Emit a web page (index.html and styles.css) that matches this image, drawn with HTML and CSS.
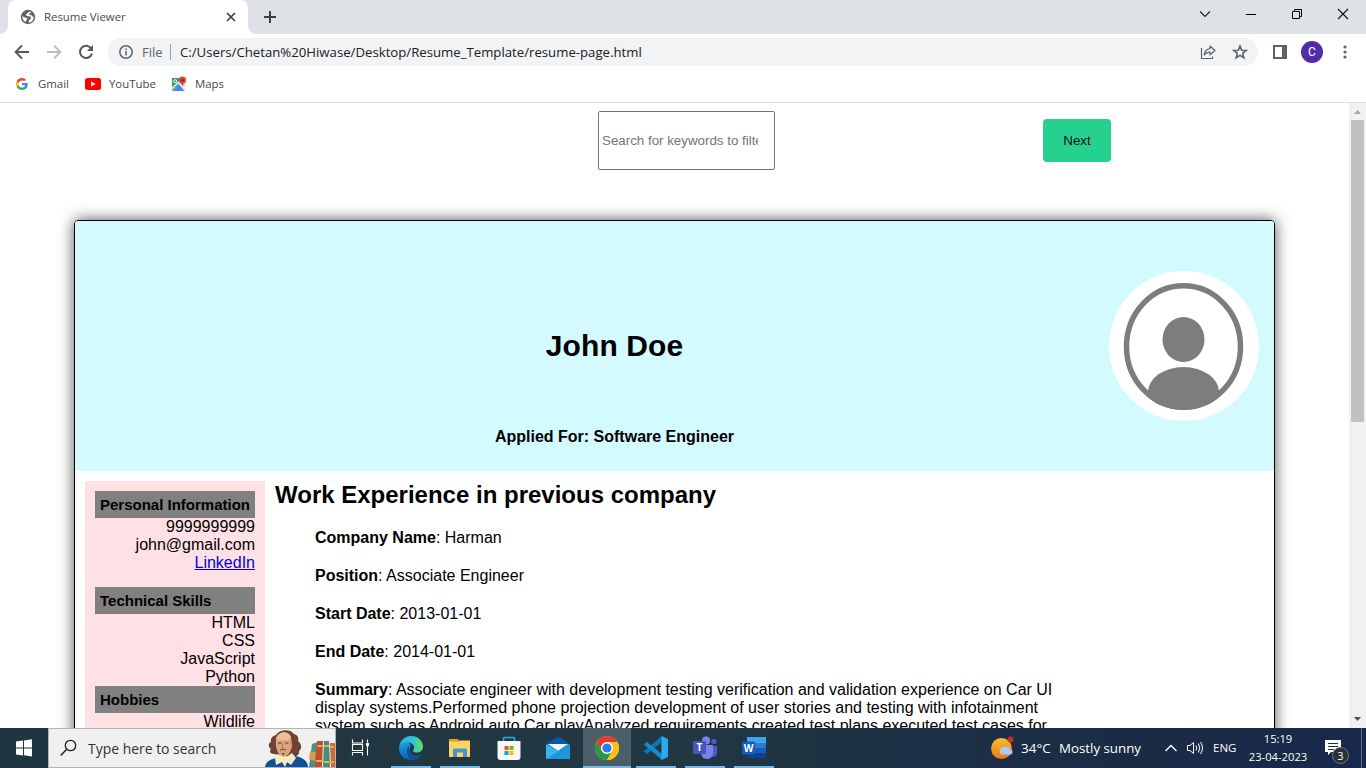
FILE: index.html
```html
<!DOCTYPE html>
<html lang="en">
<head>
<meta charset="utf-8">
<title>Resume Viewer</title>
<link rel="stylesheet" href="styles.css">
</head>
<body>
<div class="screen">
  <header class="tabstrip">
    <div class="tab">
      <svg class="globe" width="16" height="16" viewBox="0 0 16 16"><circle cx="8" cy="8" r="7.200" fill="#5f6368"/><path d="M9.500 2.400 7.200 4.200 5.800 6.500 7.800 7.200 10.500 7.400 11 9.500 9.300 11 8.600 13.600C11.800 13.400 13.800 10.800 13.700 8L12 7 10.800 5.800 8.500 5.600 9.600 4.200 11.300 3.300Z" fill="#fff"/><path d="M2.300 7.300 5.500 8.800 7.500 9.300 6.500 11.200 5.500 12.900C3.400 11.800 2.200 9.700 2.300 7.300Z" fill="#fff"/></svg>
      <span class="tab-title">Resume Viewer</span>
      <svg class="tab-close" width="10" height="10" viewBox="0 0 10 10"><path d="M1 1l8 8M9 1 1 9" stroke="#3c4043" stroke-width="1.700"/></svg>
    </div>
    <svg class="newtab" width="14" height="14" viewBox="0 0 14 14"><path d="M7 1v12M1 7h12" stroke="#3c4043" stroke-width="2"/></svg>
    <div class="winctl">
      <svg width="46" height="28" viewBox="0 0 46 28"><path d="M18 11.500l5 5 5-5" fill="none" stroke="#222" stroke-width="1.100"/></svg>
      <svg width="46" height="28" viewBox="0 0 46 28"><path d="M18 14.500h10" stroke="#000"/></svg>
      <svg width="46" height="28" viewBox="0 0 46 28"><path d="M18.500 11.500h7v7h-7zM20.500 11V9.500h7v7H26" fill="none" stroke="#000"/></svg>
      <svg width="46" height="28" viewBox="0 0 46 28"><path d="M18 9l10 10M28 9 18 19" stroke="#111" stroke-width="1.100"/></svg>
    </div>
  </header>

  <div class="toolbar">
    <svg class="nav" width="16" height="16" viewBox="0 0 16 16"><path d="M15 8H2M8 1.500 1.600 8 8 14.500" fill="none" stroke="#54585c" stroke-width="1.900"/></svg>
    <svg class="nav" width="16" height="16" viewBox="0 0 16 16"><path d="M1 8h13M8 1.500 14.400 8 8 14.500" fill="none" stroke="#bbbdbf" stroke-width="1.900"/></svg>
    <svg class="nav" width="16" height="16" viewBox="0 0 16 16"><path d="M13.200 4.500A6.100 6.100 0 1 0 14 9.500" fill="none" stroke="#54585c" stroke-width="2"/><path d="M15 1v6H9z" fill="#54585c"/></svg>
    <div class="omnibox">
      <svg width="14" height="14" viewBox="0 0 14 14"><circle cx="7" cy="7" r="6.200" fill="none" stroke="#5f6368" stroke-width="1.500"/><path d="M7 6v4.500M7 3.400v1.500" stroke="#5f6368" stroke-width="1.500"/></svg>
      <span class="scheme">File</span>
      <span class="sep"></span>
      <span class="url">C:/Users/Chetan%20Hiwase/Desktop/Resume_Template/resume-page.html</span>
      <svg class="share" width="16" height="16" viewBox="0 0 16 16"><path d="M1.500 4v10.500h11V12.500" fill="none" stroke="#5f6368" stroke-width="1.200"/><path d="M10 2l5 4.500-5 4.300V8.200C7.500 8 5.700 9 4.200 11 4.600 7.500 6.300 5 10 4.600z" fill="none" stroke="#5f6368" stroke-width="1.200" stroke-linejoin="round"/></svg>
      <svg class="star" width="16" height="16" viewBox="0 0 16 16"><path d="M8 2l1.700 4.200 4.500.3-3.500 2.900 1.200 4.400L8 11.400l-3.900 2.400 1.200-4.400-3.500-2.900 4.500-.3z" fill="none" stroke="#5f6368" stroke-width="1.600"/></svg>
    </div>
    <svg class="panel" width="14" height="14" viewBox="0 0 14 14"><path d="M0 0h14v14H0z" fill="#5f6368"/><path d="M2 2h7v10H2z" fill="#fff"/></svg>
    <span class="profile">C</span>
    <svg class="dots" width="4" height="14" viewBox="0 0 4 14"><g fill="#5f6368"><circle cx="2" cy="2" r="1.600"/><circle cx="2" cy="7" r="1.600"/><circle cx="2" cy="12" r="1.600"/></g></svg>
  </div>

  <nav class="bookmarks">
    <svg width="12" height="12" viewBox="0 0 24 24"><path d="M23.500 12.300c0-.8-.1-1.600-.2-2.300H12v4.700h6.500c-.3 1.500-1.200 2.800-2.400 3.600v3h3.900c2.200-2 3.500-5.200 3.500-9z" fill="#4285f4"/><path d="M12 24c3.200 0 6-1.100 7.900-2.900l-3.900-3c-1 .7-2.400 1.100-4 1.100-3.100 0-5.800-2.100-6.700-4.900h-4v3.100C3.300 21.300 7.300 24 12 24z" fill="#34a853"/><path d="M5.300 14.300a7 7 0 0 1 0-4.600V6.600h-4a12 12 0 0 0 0 10.800z" fill="#fbbc05"/><path d="M12 4.800c1.800 0 3.300.6 4.600 1.800L20 3.100A12 12 0 0 0 1.300 6.600l4 3.100C6.200 6.900 8.900 4.800 12 4.800z" fill="#ea4335"/></svg>
    <span class="bm gmail">Gmail</span>
    <svg width="16" height="12" viewBox="0 0 16 12"><rect width="16" height="12" rx="2.500" fill="#f00"/><path d="M6.200 3.500v5L10.600 6z" fill="#fff"/></svg>
    <span class="bm youtube">YouTube</span>
    <svg width="16" height="16" viewBox="0 0 16 16"><path d="M1 2h13v13H1z" fill="#dfe3e8"/><path d="M1 2h10L9 8l-8 6.500z" fill="#34a06b"/><path d="M1.500 15 8 8.500l5.500 6.500z" fill="#4285f4"/><path d="M1 12.500 7.500 6.500 14 13" fill="none" stroke="#f4f6f8" stroke-width="1.500"/><circle cx="4.200" cy="5.200" r="1.500" fill="none" stroke="#fff"/><path d="M11.500 0.500a3.700 3.700 0 0 0-3.700 3.800C7.800 7 11 7.500 11.500 11 12 7.500 15.200 7 15.200 4.300A3.700 3.700 0 0 0 11.500.5z" fill="#dd4b3e"/><circle cx="11.500" cy="4.200" r="1.300" fill="#8c1f17"/></svg>
    <span class="bm maps">Maps</span>
  </nav>

  <main class="viewport">
    <div class="page">
      <div class="controls">
        <input class="filter" type="text" placeholder="Search for keywords to filter">
        <button class="next">Next</button>
      </div>
      <article class="resume">
        <div class="banner">
          <div class="who"><h1>John Doe</h1><p>Applied For: Software Engineer</p></div>
          <svg class="avatar" width="150" height="150" viewBox="0 0 150 150"><defs><clipPath id="bust"><ellipse cx="74.500" cy="75.500" rx="59" ry="63.500"/></clipPath></defs><circle cx="75" cy="75" r="75" fill="#fff"/><ellipse cx="74.500" cy="75.500" rx="57" ry="60.700" fill="none" stroke="#7d7d7d" stroke-width="5.500"/><ellipse cx="74.500" cy="68.500" rx="21" ry="22.500" fill="#7d7d7d"/><ellipse cx="74.500" cy="121" rx="35.500" ry="25" clip-path="url(#bust)" fill="#7d7d7d"/><path d="M39 119h71v6l-10 9H49l-10-9z" clip-path="url(#bust)" fill="#7d7d7d"/></svg>
        </div>
        <div class="body">
          <aside class="side">
            <h4>Personal Information</h4>
            <div class="items contact">9999999999<br>john@gmail.com<br><a href="#">LinkedIn</a></div>
            <h4>Technical Skills</h4>
            <div class="items">HTML<br>CSS<br>JavaScript<br>Python</div>
            <h4>Hobbies</h4>
            <div class="items">Wildlife</div>
          </aside>
          <section class="work">
            <h2>Work Experience in previous company</h2>
            <div class="facts">
              <p><b>Company Name</b>: Harman</p>
              <p><b>Position</b>: Associate Engineer</p>
              <p><b>Start Date</b>: 2013-01-01</p>
              <p><b>End Date</b>: 2014-01-01</p>
              <p><b>Summary</b>: Associate engineer with development testing verification and validation experience on Car UI<br>display systems.Performed phone projection development of user stories and testing with infotainment<br>system such as Android auto Car playAnalyzed requirements created test plans executed test cases for</p>
            </div>
          </section>
        </div>
      </article>
    </div>
    <div class="scrollbar">
      <svg width="17" height="17" viewBox="0 0 17 17"><path d="M5 11h7L8.500 7z" fill="#a3a3a3"/></svg>
      <div class="thumb"></div>
      <svg class="down" width="17" height="17" viewBox="0 0 17 17"><path d="M5 6h7L8.500 10z" fill="#505050"/></svg>
    </div>
  </main>

  <footer class="taskbar">
    <svg class="start" width="48" height="40" viewBox="0 0 48 40"><path d="M16 13.500l7-1V19.500h-7zM24 12.400l8-1.200v8.300h-8zM16 20.500h7v7l-7-1zM24 20.500h8v7.900l-8-1.200z" fill="#fff"/></svg>
    <div class="search">
      <svg width="18" height="18" viewBox="0 0 18 18"><circle cx="10.500" cy="6.500" r="5.200" fill="none" stroke="#1b1b1b" stroke-width="1.300"/><path d="M6.700 10.300.7 16.500" stroke="#1b1b1b" stroke-width="1.400"/></svg>
      <span class="search-text">Type here to search</span>
      <svg class="poet" width="71" height="38" viewBox="0 0 71 38"><path d="M10 25c-4 0-5-3-3-5-3-2-3-6 0-7-1-4 2-6 5-7 3-5 13-7 18-1 4 1 5 4 4 7 4 3 4 8 1 10 1 4-3 6-8 6z" fill="#6f4330"/><path d="M12 9c2-6 12-8 15-1l1 9c-1 6-4 10-9 11-5-2-8-8-7-19z" fill="#dda37f"/><path d="M12.500 10C14 2 24 1 27 8l-3 3H14z" fill="#efbd98"/><path d="M28 8v12l-3 6 7-1 3-7-3-9z" fill="#6f4330"/><path d="M14 14h3.500m3.500 0h3.500" stroke="#5a3527"/><path d="M19 14l-1 5h2" stroke="#b67a5a" fill="none"/><path d="M16 21c2-1 4-1 6 0" stroke="#6f4330" fill="none"/><path d="M18 24h2.500L19 27z" fill="#6f4330"/><path d="M1 38c1-6 6-8 12-9l9 5 9-7c7 1 13 5 13 11z" fill="#12509b"/><path d="M11 29l3-4 7 4 7-5 4 5-5 7-4-3-2 5-3-5-6 3z" fill="#f7ecbf"/><path d="m48 15 6-2 1 2-3 23h-7z" fill="#4a9384"/><path d="m45 30 1-8 6 1-1 9z" fill="#d89b4b"/><path d="M53 12h6l-1 26h-7z" fill="#c34c34"/><path d="M60 12h5l1 26h-7z" fill="#438f78"/><path d="M66 14h5v24h-4z" fill="#cf6b3b"/><path d="M53.500 17h5m-6.500 15h6.500m1.500-15h5m-5.500 16h6m.5-15h4m-4 15h4" stroke="#e2ad52" stroke-width="1.800"/></svg>
    </div>
    <svg class="taskview" width="48" height="40" viewBox="0 0 48 40"><path d="M16.500 11.500v3.500h10v-3.500M16.500 27.500v-3h10v3M16.500 16.500h10v6h-10zM31.500 11.500v3M31.500 18v9.500" fill="none" stroke="#fff" stroke-width="1.100"/><path d="M30 15h3v3h-3z" fill="#fff"/></svg>
    <div class="apps">
      <div class="app open"><svg width="24" height="24" viewBox="0 0 24 24"><defs><linearGradient id="e1" x1="0" x2="1"><stop stop-color="#22a7df"/><stop offset=".55" stop-color="#2dc2df"/><stop offset="1" stop-color="#68dc54"/></linearGradient><linearGradient id="e2" x2="0" y2="1"><stop stop-color="#1b9de2"/><stop offset="1" stop-color="#0c62b4"/></linearGradient></defs><path d="M0 12C1 5 7 5 10 7c2 1 2 3 1 5-2 5 3 9 8 8 1 0 2.500-1 3-.5C20 22.500 16 24 12 24 5 24 0 19 0 12z" fill="url(#e2)"/><path d="M0 11.500C1 4 6 0 12 0c7 0 12 5 12 10.500 0 4-3 6-6.500 6-3 0-4.500-1.500-3-3C16.500 10.500 13.500 6.500 9 6.500 5 6.500 1 8.500 0 11.500z" fill="url(#e1)"/><path d="M10.500 9.500C7 11 6.500 18 12 23.900c4.500 0 8-2 10-4.700.4-.6-.2-.8-.7-.5C15 21.500 9 16 10.500 9.500z" fill="#114f96"/></svg></div>
      <div class="app open"><svg width="24" height="24" viewBox="0 0 24 24"><path d="M1 3h9l1.500 2H20v4H1z" fill="#e59b13"/><path d="M1 5.500h9.500L12 4.500h10V21H1z" fill="#ffd465"/><path d="M5 21v-7.500l1-1h12l1 1V21h-4v-4.500H9V21z" fill="#3f97d3"/></svg></div>
      <div class="app"><svg width="24" height="24" viewBox="0 0 24 24"><path d="M6.500 6V2.500Q6.500 1.500 7.500 1.500h9q1 0 1 1V6" fill="none" stroke="#2aa8df" stroke-width="1.700"/><path d="M.5 5h23v16q0 3-3 3h-17q-3 0-3-3z" fill="#f7f7f7"/><path d="M7.500 10h4v4h-4z" fill="#f25022"/><path d="M12.500 10h4v4h-4z" fill="#7fba00"/><path d="M7.500 15h4v4h-4z" fill="#00a4ef"/><path d="M12.500 15h4v4h-4z" fill="#ffb900"/></svg></div>
      <div class="app"><svg width="24" height="24" viewBox="0 0 24 24"><path d="M0 8 12 .5 24 8v4H0z" fill="#0758a8"/><path d="M2 8h20l-10 7z" fill="#eef4f9"/><path d="M0 8l12 7 12-7v15H0z" fill="#36b5ee"/><path d="M0 23 24 8v15z" fill="#1f95df"/><path d="M2 8h20l-10 6z" fill="#eef4f9"/></svg></div>
      <div class="app open active"><svg width="24" height="24" viewBox="0 0 24 24"><circle cx="12" cy="12" r="12" fill="#fbc116"/><path d="M1.600 6A12 12 0 0 1 22.400 6H12l-5.200 9z" fill="#e33b2e"/><path d="M1.600 6A12 12 0 0 0 12 24l5.200-9H6.800z" fill="#229a49"/><path d="M12 6h10.400A12 12 0 0 1 12 24l5.200-9z" fill="#fbc116"/><circle cx="12" cy="12" r="6" fill="#fff"/><circle cx="12" cy="12" r="4.600" fill="#3079e8"/></svg></div>
      <div class="app open"><svg width="24" height="24" viewBox="0 0 24 24"><path d="M0 16l3 2L18 6V0L0 15z" fill="#0877b9"/><path d="M18 0v6L18 24 0 8.500 3 6z" fill="none"/><path d="M0 8.500 3 6l15 12v6z" fill="#168bd2"/><path d="M17.500 0 24 3v18l-6.500 3z" fill="#31a9ef"/></svg></div>
      <div class="app open"><svg width="24" height="24" viewBox="0 0 24 24"><circle cx="13" cy="4.500" r="4" fill="#7b83eb"/><circle cx="21" cy="5.500" r="2.600" fill="#5059c9"/><path d="M15 10h9v7q0 4-5 4z" fill="#5059c9"/><path d="M8 9h12v8a6 6 0 0 1-12 0z" fill="#7b83eb"/><rect y="5" width="13" height="13" rx="1" fill="#4b53bc"/><text class="glyph" x="6.500" y="15.200" text-anchor="middle">T</text></svg></div>
      <div class="app open"><svg width="24" height="24" viewBox="0 0 24 24"><path d="M5 1h19v6H5z" fill="#41a5ee"/><path d="M5 7h19v5H5z" fill="#2b7cd3"/><path d="M5 12h19v5H5z" fill="#185abd"/><path d="M5 17h19v5H5z" fill="#103f91"/><rect y="5.500" width="13" height="13" rx="1" fill="#185abd"/><text class="glyph" x="6.500" y="15.500" text-anchor="middle">W</text></svg></div>
    </div>
    <div class="tray">
      <svg class="sun" width="24" height="24" viewBox="0 0 24 24"><defs><linearGradient id="s" x2="0" y2="1"><stop stop-color="#f8bd30"/><stop offset="1" stop-color="#ee7810"/></linearGradient></defs><circle cx="10.500" cy="12.500" r="10.500" fill="url(#s)"/><path d="M11 18.500a3.300 3.300 0 0 1 .5-6.500 4.500 4.500 0 0 1 7.500 1.500 2.600 2.600 0 0 1 1 5z" fill="#a9cbf7"/><circle cx="19.500" cy="3.500" r="3" fill="#cb2e20"/></svg>
      <span class="temp">34°C</span><span class="sky">Mostly sunny</span>
      <svg class="chev" width="14" height="10" viewBox="0 0 14 10"><path d="M1.500 8 7 2.500 12.500 8" fill="none" stroke="#fff" stroke-width="1.300"/></svg>
      <svg class="vol" width="18" height="14" viewBox="0 0 18 14"><path d="M1.500 4.500H4l3.500-3v11L4 9.500H1.500z" fill="none" stroke="#fff"/><path d="M10 4.500q1.500 2.500 0 5M12.300 2.500q3 4.500 0 9M14.500 1q4 6 0 12" fill="none" stroke="#fff"/></svg>
      <span class="lang">ENG</span>
      <div class="clock"><span class="time">15:19</span><span class="date">23-04-2023</span></div>
      <div class="notif"><svg width="18" height="18" viewBox="0 0 18 18"><path d="M0 0h16v12H6l-3 3v-3H0z" fill="#fff"/><path d="M3 3.500h10M3 6.500h10M3 9.500h6" stroke="#1b2b43"/></svg><span class="badge">3</span></div>
      <span class="peek"></span>
    </div>
  </footer>
</div>
</body>
</html>
```
FILE: styles.css
```css
* { box-sizing: border-box; }
body { margin: 0; font-family: "Liberation Sans", Arial, sans-serif; }
svg { display: block; flex: none; }
.screen { width: 1366px; height: 768px; display: flex; flex-direction: column; overflow: hidden; background: #fff; }
.tabstrip, .toolbar, .bookmarks, .taskbar { flex: none; display: flex; font-family: "Open Sans", "Noto Sans", sans-serif; white-space: nowrap; }
.tabstrip { height: 34px; background: radial-gradient(circle at 0 26px, #dee1e6 7.500px, transparent 8px) 0 0 / 8px 34px no-repeat, radial-gradient(circle at 8px 26px, #dee1e6 7.500px, transparent 8px) 248px 0 / 8px 34px no-repeat, linear-gradient(#fff, #fff) 0 26px / 256px 8px no-repeat, #dee1e6; }
.tab { width: 240px; margin-left: 8px; background: #fff; border-radius: 8px 8px 0 0; display: flex; align-items: center; padding: 0 12px; }
.tab-title { margin-left: 8px; margin-top: -1px; width: 183px; font-size: 11.4px; color: #45494d; }
.tab-close { margin-left: 1px; }
.newtab { margin: 10px 0 0 15px; }
.winctl { display: flex; margin-left: auto; }
.toolbar { height: 35px; align-items: center; padding-left: 14px; }
.nav { margin-right: 16px; }
.omnibox { width: 1150px; height: 28px; margin-left: -2px; border-radius: 14px; background: #f1f3f4; display: flex; align-items: center; padding: 0 10px 0 11px; }
.scheme { margin-left: 9px; width: 21px; font-size: 13px; color: #5f6368; }
.sep { width: 1px; height: 16px; margin: 0 9px 0 7px; background: #9aa0a6; }
.url { font-size: 13.200px; padding-top: 1px; color: #202124; }
.share { margin-left: auto; margin-right: 16px; }
.panel { margin-left: 15px; }
.profile { width: 22px; height: 22px; margin-left: 14px; border-radius: 50%; background: #512da8; color: #fff; font: 12px/22px Roboto, sans-serif; text-align: center; }
.dots { margin-left: 20px; }
.bookmarks { height: 34px; align-items: center; padding: 0 0 4px 16px; border-bottom: 1px solid #dadce0; font-size: 11.400px; color: #45494d; }
.bm { margin-left: 8px; flex: none; }
.gmail { width: 51px; margin-left: 10px; margin-right: -4px; }
.youtube { width: 62px; }
.viewport { flex: 1; min-height: 0; display: flex; overflow: hidden; }
.page { width: 1349px; overflow: hidden; }
.controls { height: 117px; display: flex; align-items: flex-start; padding: 8px 0 0 598px; }
.filter { width: 177px; height: 59px; padding: 1px 16px 1px 3px; border: 1px solid #767676; border-radius: 2px; font: 13.333px "Liberation Sans", Arial, sans-serif; }
.filter::placeholder { color: #757575; }
.next { width: 68px; height: 43px; margin: 8px 0 0 268px; padding: 0; border: 0; border-radius: 4px; background: #26d08f; color: #111; font: 13.333px "Liberation Sans", Arial, sans-serif; }
.resume { width: 1201px; height: 900px; margin-left: 74px; border: 1px solid #000; border-radius: 4px; box-shadow: 0 0 15px rgba(0,0,0,.68); }
.banner { height: 250px; background: #d2faff; border-radius: 3px; display: flex; }
.who { width: 1079px; text-align: center; }
.who h1 { margin: 106px 0 0; font-size: 30px; line-height: 37px; letter-spacing: .1px; }
.who p { margin: 64px 0 0; font-size: 16px; line-height: 18px; font-weight: 700; }
.avatar { margin: 50px 0 0 -45px; }
.body { display: flex; padding: 10px; height: 650px; }
.side { width: 180px; padding: 10px; background: #ffe0e5; }
.side h4 { margin: 0; height: 27px; padding: 0 5px; background: #808080; font-size: 15px; line-height: 28px; white-space: nowrap; }
.items { text-align: right; font-size: 16px; line-height: 18px; }
.contact { margin-bottom: 15px; }
.items a { color: #00e; }
.work { padding-left: 10px; }
.work h2 { margin: 0; font-size: 24px; line-height: 28px; }
.facts { padding-left: 40px; }
.facts p { margin: 0 0 20px; font-size: 16px; line-height: 18px; white-space: nowrap; }
.work h2 + .facts { margin-top: 20px; }
.scrollbar { width: 17px; background: #f1f1f1; display: flex; flex-direction: column; }
.thumb { width: 13px; height: 302px; margin-left: 2px; background: #c1c1c1; }
.down { margin-top: auto; }
.taskbar { height: 40px; background: linear-gradient(90deg, #1f3640, #213842 50%, #1b3045 68%, #1b2a45 85%, #17294b); color: #fff; }
.search { width: 288px; background: #f0f0f0; border: 1px solid #b5b5b5; display: flex; align-items: center; padding-left: 11px; }
.search-text { flex: none; margin-left: 10px; width: 176px; font-size: 13.950px; color: #333; }
.taskview { margin-right: 3px; }
.apps { display: flex; gap: 1px; }
.app { width: 48px; padding: 8px 12px 0; }
.open { background: linear-gradient(#76b9ed, #76b9ed) center bottom / 40px 2px no-repeat; }
.active { background: linear-gradient(#76b9ed, #76b9ed) center bottom / 48px 2px no-repeat, #4c5f68; }
.glyph { font: bold 10px "Open Sans", sans-serif; fill: #fff; }
.tray { margin-left: auto; width: 375px; display: flex; align-items: center; }
.temp { margin-left: 6px; width: 38px; font-size: 13.500px; }
.sky { width: 105px; font-size: 13.300px; }
.vol { margin-left: 8px; }
.lang { margin-left: 9px; margin-top: -2px; width: 26px; font-size: 11.500px; }
.clock { margin-left: 6px; width: 66px; display: flex; flex-direction: column; align-items: center; font-size: 11.200px; line-height: 18px; }
.notif { position: relative; margin: 1px 0 0 14px; }
.badge { position: absolute; left: 7px; top: 7px; width: 17px; height: 17px; border: 1px solid #777; border-radius: 50%; background: #2b2f36; font-size: 11px; line-height: 15px; text-align: center; }
.peek { margin-left: auto; width: 5px; height: 40px; border-left: 1px solid #66728a; }
```
